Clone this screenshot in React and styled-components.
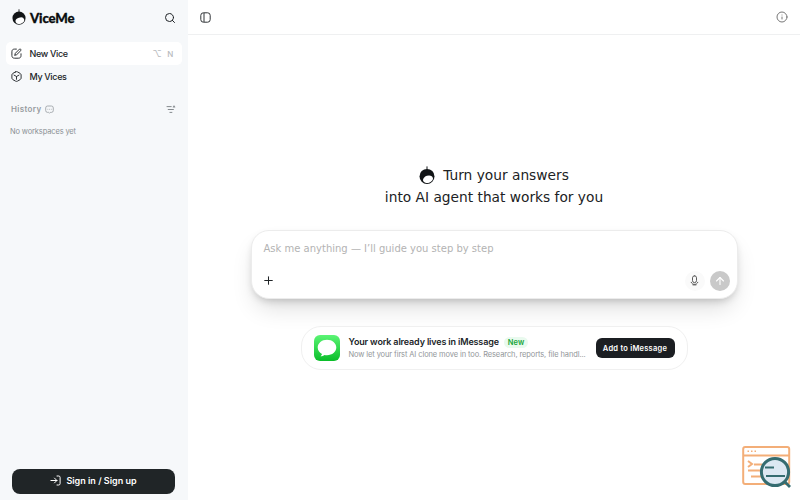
import React from 'react';
import styled, { createGlobalStyle } from 'styled-components';
import { Search, Info, ArrowUp, Plus } from 'lucide-react';

const GlobalStyle = createGlobalStyle`
  * {
    box-sizing: border-box;
  }

  body {
    margin: 0;
    background: #fff;
    color: #202427;
    font-family: Inter, "Liberation Sans", sans-serif;
  }

  svg {
    display: block;
    flex-shrink: 0;
  }

  button {
    border: 0;
    padding: 0;
    font-family: inherit;
  }
`;

const Page = styled.div`
  display: flex;
  height: 100vh;
  overflow: hidden;
`;

const Sidebar = styled.aside`
  width: 188px;
  flex-shrink: 0;
  display: flex;
  flex-direction: column;
  background: #f6f8fa;
`;

const Brand = styled.div`
  height: 35px;
  padding: 0 12px 0 12px;
  display: flex;
  align-items: center;

  & > .name {
    flex: 1;
    margin-left: 4px;
    color: #0b0d0e;
    font-family: Lato, sans-serif;
    font-size: 13.2px;
    font-weight: 900;
    letter-spacing: -0.15px;
    line-height: 18px;
    -webkit-text-stroke: 0.3px #0b0d0e;
  }
`;

const Nav = styled.nav`
  padding: 7px 6px 0;
`;

const NavItem = styled.div`
  height: 23px;
  padding: 0 9px 0 5px;
  display: flex;
  align-items: center;
  border-radius: 5px;
  background: ${({ $active }) => ($active ? '#fff' : 'transparent')};
  font-size: 9px;
  font-weight: 500;
  letter-spacing: -0.34px;

  & > .label {
    flex: 1;
    margin-left: 7.5px;
  }
`;

const Keys = styled.span`
  display: flex;
  align-items: center;
  gap: 6px;
  color: #b7babd;
  font-size: 8px;
  line-height: 10px;

  & > .option {
    font-size: 9px;
  }
`;

const History = styled.div`
  height: 20px;
  margin-top: 11px;
  padding: 0 12px 0 11px;
  display: flex;
  align-items: center;
  justify-content: space-between;
  color: #969b9f;

  & > .title {
    display: flex;
    align-items: center;
    gap: 3px;
    font-size: 8px;
    font-weight: 600;
    line-height: 10px;
    letter-spacing: 0.35px;
  }
`;

const Empty = styled.div`
  flex: 1;
  padding: 8px 10px;
  color: #8b9094;
  font-size: 7.5px;
  letter-spacing: -0.14px;
  line-height: 10px;
`;

const SignIn = styled.button`
  height: 25px;
  margin: 0 13px 6.5px 12px;
  padding-bottom: 1px;
  display: flex;
  align-items: center;
  justify-content: center;
  gap: 5px;
  border-radius: 8px;
  background: #202527;
  color: #fff;
  font-size: 9px;
  font-weight: 600;
`;

const Main = styled.main`
  flex: 1;
  display: flex;
  flex-direction: column;
`;

const TopBar = styled.header`
  height: 35px;
  padding: 0 12px;
  display: flex;
  align-items: center;
  justify-content: space-between;
  border-bottom: 1px solid #eff0f1;
`;

const Content = styled.section`
  flex: 1;
  display: flex;
  flex-direction: column;
  align-items: center;
`;

const Heading = styled.h1`
  margin: 128.5px 0 0;
  color: #202224;
  font-family: "DejaVu Sans", sans-serif;
  font-size: 13.75px;
  font-weight: 400;
  line-height: 22.5px;
  text-align: center;

  & > .line {
    display: flex;
    align-items: center;
    justify-content: center;
    gap: 8px;
  }
`;

const Composer = styled.div`
  width: 487px;
  height: 69px;
  margin-top: 21px;
  padding: 11px 7px 7px 12px;
  display: flex;
  flex-direction: column;
  justify-content: space-between;
  border: 1px solid #ececec;
  border-radius: 18px;
  background: #fff;
  box-shadow: 0 13px 24px -5px rgba(0, 0, 0, 0.14), 0 4px 8px -3px rgba(0, 0, 0, 0.22);
`;

const Placeholder = styled.div`
  color: #b3b3b3;
  font-family: "DejaVu Sans", sans-serif;
  font-size: 10px;
  line-height: 13px;
`;

const Tools = styled.div`
  display: flex;
  align-items: center;
  gap: 5px;

  & > .add {
    margin-right: auto;
    margin-left: -2px;
  }
`;

const RoundButton = styled.button`
  width: 20px;
  height: 20px;
  display: flex;
  align-items: center;
  justify-content: center;
  border-radius: 50%;
  background: ${({ $filled }) => ($filled ? '#c9c9c9' : '#fafafa')};
  color: ${({ $filled }) => ($filled ? '#fff' : '#444')};
`;

const Promo = styled.div`
  width: 387px;
  height: 44px;
  margin-top: 27.5px;
  padding: 0 12px;
  display: flex;
  align-items: center;
  border: 1px solid #f0f0f0;
  border-radius: 20px;
  background: #fff;
`;

const PromoText = styled.div`
  margin-left: 9px;
  white-space: nowrap;

  & > .title {
    display: flex;
    align-items: center;
    gap: 5px;
    font-size: 9px;
    font-weight: 600;
    letter-spacing: -0.15px;
    line-height: 12px;
  }

  & > .detail {
    margin-top: 2px;
    color: #929699;
    font-size: 7.5px;
    letter-spacing: -0.11px;
    line-height: 10px;
  }
`;

const Badge = styled.span`
  padding: 0 4px;
  border-radius: 6px;
  background: #e9faee;
  color: #16a53a;
  font-size: 7.5px;
  letter-spacing: 0.1px;
  line-height: 11px;
`;

const PromoButton = styled.button`
  width: 79px;
  height: 20px;
  margin-left: auto;
  border-radius: 6px;
  background: #1b1e22;
  color: #fff;
  font-size: 7.5px;
  font-weight: 600;
  letter-spacing: 0.25px;
`;

const Widget = styled.div`
  position: fixed;
  right: 8px;
  bottom: 12px;
`;

const Acorn = ({ size = 16 }) => (
  <svg width={size} height={size * 1.15} viewBox="0 0 16 18.4" fill="none">
    <path d="M8 4V.8" stroke="#111416" strokeWidth="1" strokeLinecap="round" />
    <circle cx="8" cy="10.4" r="7.5" fill="#111416" />
    <ellipse cx="9" cy="13.3" rx="5.1" ry="3.6" fill="#fff" transform="rotate(-18 9 13.3)" />
  </svg>
);

const EditIcon = () => (
  <svg width="11" height="11" viewBox="0 0 11 11" fill="none" stroke="#303437" strokeWidth="1" strokeLinecap="round" strokeLinejoin="round">
    <path d="M5.4 1.1H3.6C1.8 1.1.9 2 .9 3.8v3.7c0 1.8.9 2.7 2.7 2.7h3.7c1.8 0 2.7-.9 2.7-2.7V5.8" />
    <path d="M4 7.1l.3-1.8L8.5 1.1c.8-.5 1.9.5 1.4 1.4L5.7 6.7 4 7.1Z" />
  </svg>
);

const VicesIcon = () => (
  <svg width="11" height="11" viewBox="0 0 11 11" fill="none" stroke="#303437" strokeWidth="1" strokeLinecap="round" strokeLinejoin="round">
    <path d="M4.5.9c.7-.4 1.3-.4 2 0l2.7 1.5c.6.4.9.9.9 1.6v3c0 .7-.3 1.2-.9 1.6l-2.7 1.5c-.7.4-1.3.4-2 0L1.8 8.6C1.2 8.2.9 7.7.9 7V4c0-.7.3-1.2.9-1.6L4.5.9Z" />
    <path d="M3 4.1l2.5 1.4L8 4.1M5.5 5.5v2.8" />
  </svg>
);

const PanelIcon = () => (
  <svg width="11" height="11" viewBox="0 0 11 11" fill="none" stroke="#303437" strokeWidth="1">
    <rect x=".8" y=".8" width="9.4" height="9.4" rx="2.6" />
    <path d="M4 1v9" />
  </svg>
);

const ChatIcon = () => (
  <svg width="9" height="9" viewBox="0 0 9 9" fill="none" stroke="#969b9f" strokeWidth=".8">
    <path d="M2.6 1h3.8A1.9 1.9 0 0 1 8.3 2.9v2.6a1.9 1.9 0 0 1-1.9 1.9H5.3l-.8.8-.8-.8H2.6A1.9 1.9 0 0 1 .7 5.5V2.9A1.9 1.9 0 0 1 2.6 1Z" />
    <path d="M2.5 4.3h.7m1 0h.7m1 0h.7" />
  </svg>
);

const FilterIcon = () => (
  <svg width="10" height="9" viewBox="0 0 10 9" fill="none" stroke="#858a8e" strokeWidth="1">
    <path d="M.6 1.6h5M1.8 4.5h6M3.5 7.4h2.8M8 3V1M6.8 1.9 8 .8l1.2 1.1" />
  </svg>
);

const LoginIcon = () => (
  <svg width="11" height="11" viewBox="0 0 11 11" fill="none" stroke="#fff" strokeWidth="1" strokeLinecap="round" strokeLinejoin="round">
    <path d="M.9 5.5h6M4.5 3.1l2.4 2.4-2.4 2.4M7 1h1.7c.9 0 1.4.5 1.4 1.4v6.2c0 .9-.5 1.4-1.4 1.4H7" />
  </svg>
);

const MicIcon = () => (
  <svg width="9" height="11" viewBox="0 0 9 11" fill="none" stroke="#484848" strokeWidth=".9" strokeLinecap="round">
    <rect x="2.5" y=".8" width="4" height="6.8" rx="2" />
    <path d="M1.2 7.3c.6 2.9 6 2.9 6.6 0M3 9.9h3" />
  </svg>
);

const MessageIcon = () => (
  <svg width="26" height="26" viewBox="0 0 26 26">
    <defs>
      <linearGradient id="messageGreen" x1="0" y1="0" x2="0" y2="1">
        <stop stopColor="#5bf575" />
        <stop offset="1" stopColor="#0abd29" />
      </linearGradient>
    </defs>
    <rect width="26" height="26" rx="6" fill="url(#messageGreen)" />
    <path d="M13 4.8c-5.2 0-9.3 3.4-9.3 7.7 0 2.8 1.7 5 4.3 6.4-.2 1-.8 1.8-1.5 2.3 1.7 0 3-.6 4-1.3.8.2 1.7.3 2.5.3 5.2 0 9.3-3.4 9.3-7.7s-4.1-7.7-9.3-7.7Z" fill="#fff" />
  </svg>
);

const InspectIcon = () => (
  <svg width="50" height="44" viewBox="0 0 50 44" fill="none">
    <g stroke="#f3ae78" strokeWidth="2">
      <rect x="1.2" y="3" width="46" height="37" rx="2" fill="#fff" />
      <path d="M1 11.5h46" />
      <path d="M5.5 7.2h1.5m2 0h1.5m2 0H14" strokeWidth="1.4" />
      <path d="m6 17 4 3-4 3M12 20.5h8M6 26.5h14M9 32.5h11" />
    </g>
    <circle cx="33" cy="28" r="13.6" fill="#dce8f2" stroke="#356c70" strokeWidth="3" />
    <path d="M23 23.5h9M24 32h19" stroke="#356c70" strokeWidth="2.2" />
    <path d="m43 38 5 5" stroke="#356c70" strokeWidth="2.8" />
  </svg>
);

const App = () => (
  <>
    <GlobalStyle />
    <Page>
      <Sidebar>
        <Brand>
          <Acorn size={14} />
          <span className="name">ViceMe</span>
          <Search size={12} strokeWidth={2} />
        </Brand>
        <Nav>
          <NavItem $active>
            <EditIcon />
            <span className="label">New Vice</span>
            <Keys><span className="option">⌥</span><span>N</span></Keys>
          </NavItem>
          <NavItem>
            <VicesIcon />
            <span className="label">My Vices</span>
          </NavItem>
        </Nav>
        <History>
          <span className="title">History <ChatIcon /></span>
          <FilterIcon />
        </History>
        <Empty>No workspaces yet</Empty>
        <SignIn><LoginIcon />Sign in / Sign up</SignIn>
      </Sidebar>
      <Main>
        <TopBar>
          <PanelIcon />
          <Info size={12} color="#777" />
        </TopBar>
        <Content>
          <Heading>
            <div className="line"><Acorn size={16} />Turn your answers</div>
            <div>into AI agent that works for you</div>
          </Heading>
          <Composer>
            <Placeholder>Ask me anything — I’ll guide you step by step</Placeholder>
            <Tools>
              <Plus className="add" size={13} strokeWidth={1.9} />
              <RoundButton><MicIcon /></RoundButton>
              <RoundButton $filled><ArrowUp size={12} strokeWidth={2.2} /></RoundButton>
            </Tools>
          </Composer>
          <Promo>
            <MessageIcon />
            <PromoText>
              <div className="title">Your work already lives in iMessage <Badge>New</Badge></div>
              <div className="detail">Now let your first AI clone move in too. Research, reports, file handl...</div>
            </PromoText>
            <PromoButton>Add to iMessage</PromoButton>
          </Promo>
        </Content>
      </Main>
      <Widget><InspectIcon /></Widget>
    </Page>
  </>
);

export default App;
